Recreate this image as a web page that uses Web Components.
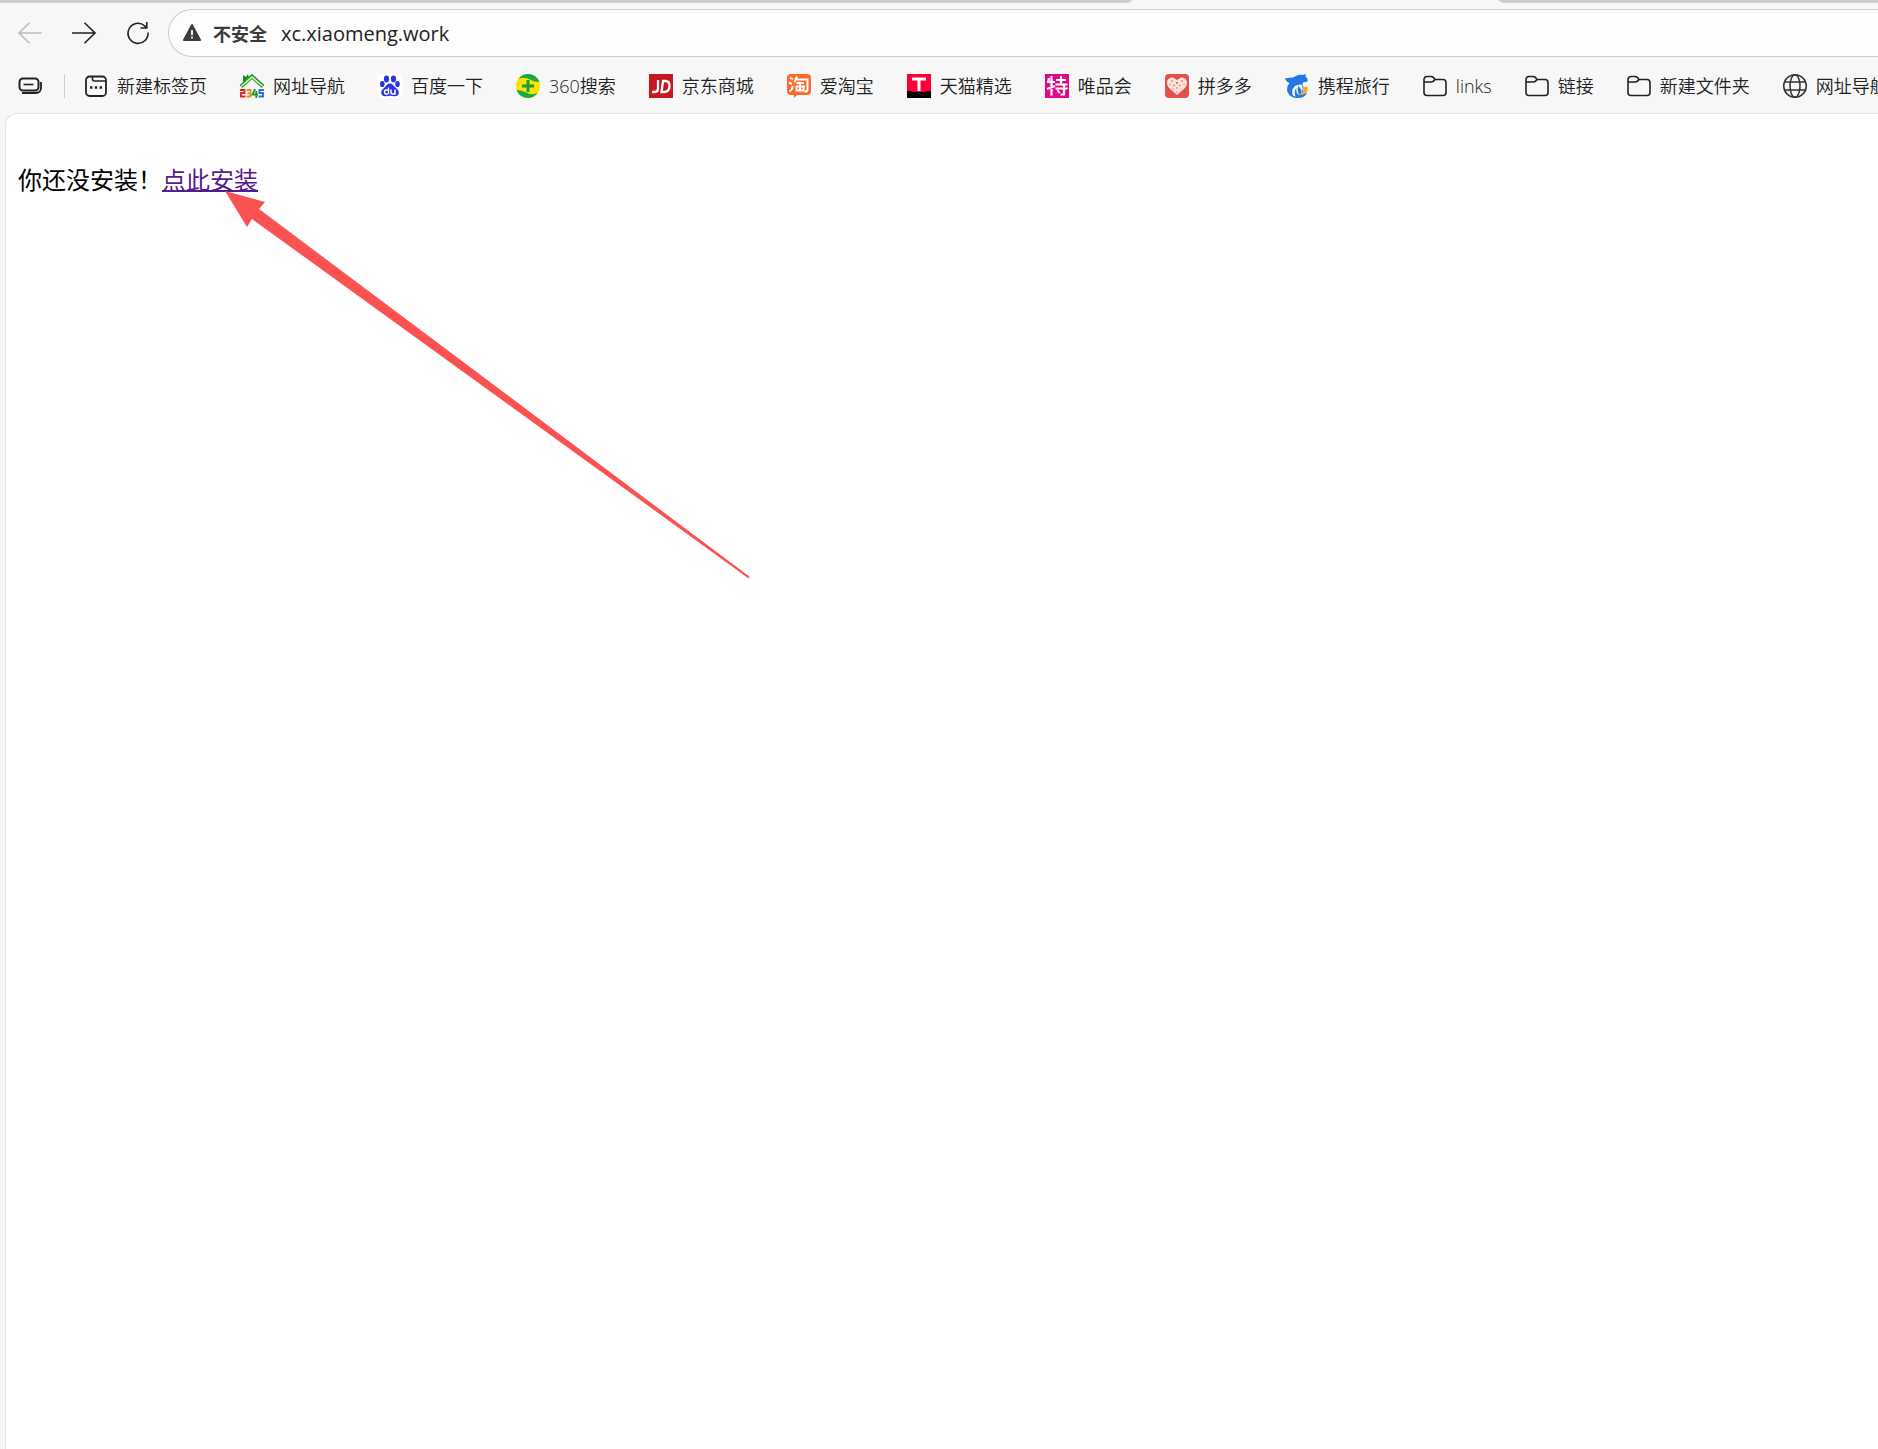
<!DOCTYPE html>
<html lang="zh-CN">
<head>
<meta charset="utf-8">
<title>xc.xiaomeng.work</title>
<style>
  html, body {
    margin: 0;
    height: 100%;
    overflow: hidden;
    font-family: "Open Sans", "Noto Sans CJK SC", sans-serif;
  }
</style>
</head>
<body>
<browser-window></browser-window>

<script>
const ICONS = {
  back: '<path d="M23.500 12H1M11.500 1.800L1 12L11.500 22.200" fill="none" stroke="#bdbdbd" stroke-width="1.600"/>',
  forward: '<path d="M0 12H23M12.500 1.800L23 12L12.500 22.200" fill="none" stroke="#222" stroke-width="1.600"/>',
  reload: '<path d="M22 11.500A10 10 0 1 1 18.600 4.800L20.500 6.600M20.800 1V7H14.500" fill="none" stroke="#222" stroke-width="1.600"/>',
  warning: '<path d="M12 4.200L20 19H4Z" fill="#3b3b3b" stroke="#3b3b3b" stroke-width="2" stroke-linejoin="round"/><path d="M12 9V14M12 15.500V17.500" stroke="#fff" stroke-width="1.800"/>',
  tabs: '<rect x="1.500" y="4.500" width="19" height="12" rx="3.500" fill="none" stroke="#222" stroke-width="2"/><path d="M5.500 10.500H15.500" stroke="#222" stroke-width="1.600"/><path d="M4 19H17.500Q23 19 23 13.500V8" fill="none" stroke="#222" stroke-width="1.800"/>',
  page: '<rect x="2" y="2.500" width="20" height="19.500" rx="3.500" fill="none" stroke="#222" stroke-width="1.800"/><path d="M8.500 2.500V5Q8.500 7 10.500 7H22" fill="none" stroke="#222" stroke-width="1.600"/><path d="M6 13.500h2.400M10.800 13.500h2.400M15.600 13.500h2.400" stroke="#222" stroke-width="2.400"/>',
  nav: '<path d="M3 1L6 3L8 0L9 4L12 4L7 8L3 8Z" fill="#159015"/><path d="M1 12.500L12 2.500L23 12.500" fill="none" stroke="#2a9a22" stroke-width="4"/><path d="M1.500 12.300L12 3L22.500 12.300" fill="none" stroke="#dff0dc" stroke-width="1.500"/><rect y="14" width="24" height="10" fill="#fff"/><g fill="none" stroke-width="1.900"><path d="M0 16H4.500V19H1V22.500H5.500" stroke="#e8231e"/><path d="M6.500 16H10.500V22.500H6.500M7.500 19.200H10.500" stroke="#f58a1f"/><path d="M15 15L12.500 20.500H18M16.300 17V24" stroke="#24952a"/><path d="M24 16H19.500V19H23V22.500H18.500" stroke="#2171d6"/></g>',
  baidu: '<rect width="24" height="24" rx="2" fill="#fff"/><g fill="#2932e1"><ellipse cx="8.500" cy="5" rx="2.600" ry="3.400"/><ellipse cx="15.500" cy="5" rx="2.600" ry="3.400"/><ellipse cx="4.300" cy="10" rx="2.300" ry="3.100"/><ellipse cx="19.500" cy="10" rx="2.300" ry="3.100"/><path d="M12 9.500C14.800 9.500 15.500 12 18 14C22.500 17.500 21.500 22.300 16.500 22.200C13 21.500 11 21.500 8 22.200C3 22.800 1.500 17.500 5.500 14.500C8.500 12 8.800 9.500 12 9.500Z"/></g><path d="M10.500 13.500V20M10 16H8Q6.500 16 6.500 18T8 20H10M13 15.500V18.500Q13 20 14.500 20H17V15.500" fill="none" stroke="#fff" stroke-width="1.500"/>',
  so: '<circle cx="12" cy="12" r="12" fill="#ffe100"/><path d="M2.500 5Q6 0 12 0Q20 0 23.500 8Q18 8 14 5.500Q8 2.500 2.500 5ZM21.500 19Q18 24 12 24Q4 24 .5 16Q6 16 10 18.500Q16 21.500 21.500 19Z" fill="#19a846"/><path d="M12 6V18M6 12H18" stroke="#12a03c" stroke-width="3"/>',
  jd: '<rect width="24" height="24" fill="#c81623"/><path d="M9 6V14.500Q9 18 6 18H3M13 7H16.500Q20.500 7 20.500 12T16 18H12.500L14 7" fill="none" stroke="#fff" stroke-width="2.300"/>',
  taobao: '<path d="M4 0H20Q24 0 24 4V17Q24 21 20 21H10L7 24V21H4Q0 21 0 17V4Q0 0 4 0Z" fill="#ff6a28"/><g fill="none" stroke="#fff" stroke-width="2"><path d="M3 3.500L6 5.500M2 8.500L5 10M2.500 17.500Q6 15 5.500 12M10 2.500L7.500 8M9 5.500H20.500V15.500Q20.500 18 17.500 17.500M9.500 9H17M8.500 12.500H18M13 8V16M9.500 13.500V16.500H16.500V13.500"/></g>',
  tmall: '<rect width="24" height="24" fill="#000"/><path d="M0 0H24V17H20.500Q19 17 18.500 18H5.500Q5 17 3.500 17H0Z" fill="#ff0036"/><path d="M5 5H19M12 5V17" stroke="#fff" stroke-width="3"/>',
  vip: '<rect width="24" height="24" fill="#e0078c"/><path d="M4 4L3 9M2 8H10M6.500 2V21.500M2 15L10 12M11 6H21M16 2V10M10.500 10.500H22.500M10.500 14.500H22.500M19 11V20.500H15.500M12.500 16L14.500 19" fill="none" stroke="#fff" stroke-width="2.200"/>',
  pdd: '<rect width="24" height="24" rx="4" fill="#e2504b"/><path d="M12 21L4 14Q1 10 2.500 6Q4 3 8 3.500L12 6L16 3.500Q20 3 21.500 6Q23 10 20 14Z" fill="#fbe3dd"/><g fill="#e2504b"><circle cx="7" cy="7" r=".8"/><circle cx="17" cy="7" r=".8"/><circle cx="12" cy="9" r="1"/><circle cx="5" cy="10.500" r=".6"/><circle cx="19" cy="10.500" r=".6"/><circle cx="9" cy="11.500" r=".8"/><circle cx="15" cy="11.500" r=".8"/><circle cx="12" cy="14" r=".8"/><circle cx="8" cy="15" r=".6"/><circle cx="16" cy="15" r=".6"/><circle cx="12" cy="18" r=".6"/></g>',
  ctrip: '<path d="M0 4Q3 4.500 5 3.500Q8 4 10 2.500Q13 0 18 1L21 0L20.500 2.500Q23.500 5 22.500 7.500L18 8.500Q17 10 18 12.500Q19.500 17 16 20L22 19Q20 24 13 24Q5 24 2.500 18Q1 13 4.500 9Q1 8 0 4Z" fill="#2577e3"/><path d="M8.500 22Q5 17 10 12Q14 10 16.500 10.500Q18.500 14 17 18L13.500 21Q10.500 18 11.500 14Q8.500 17 10.500 22.500Z" fill="#f7f7f7"/><path d="M13.500 12Q11.500 16 14 20.500Q17 19 16.500 16Z" fill="#2577e3"/><path d="M18 12.500L22.500 13Q23.500 18 19.500 20Q17 21.500 14 21Q18.500 19 18.500 16Q18.500 14 18 12.500Z" fill="#ffa51f"/>',
  folder: '<path d="M1 6V18.500A3 3 0 0 0 4 21.500H20A3 3 0 0 0 23 18.500V8.500A3 3 0 0 0 20 5.500H12Q10.500 2.500 8 2.500H4A3 3 0 0 0 1 5.500V8H8.500Q10.500 8 12 5.500" fill="none" stroke="#222" stroke-width="1.600"/>',
  globe: '<g fill="none" stroke="#333" stroke-width="1.500"><circle cx="12" cy="12" r="11.300"/><ellipse cx="12" cy="12" rx="5" ry="11.300"/><path d="M1.500 8H22.500M1.500 16H22.500"/></g>',
};

class UiIcon extends HTMLElement {
  constructor() {
    super();
    this.attachShadow({ mode: 'open' });
  }

  connectedCallback() {
    this.shadowRoot.innerHTML = `
      <style>
        :host { display: block; flex: none; width: 24px; height: 24px; }
        svg { display: block; width: 100%; height: 100%; overflow: visible; }
      </style>
      <svg viewBox="0 0 24 24" aria-hidden="true">${ICONS[this.getAttribute('name')]}</svg>
    `;
  }
}
customElements.define('ui-icon', UiIcon);

class TabStrip extends HTMLElement {
  constructor() {
    super();
    this.attachShadow({ mode: 'open' }).innerHTML = `
      <style>
        :host {
          display: grid;
          grid-template-columns: 1132fr 367fr 379fr;
          height: 3px;
          background: #f7f7f7;
        }
        .left { background: #cdcdcd; border-bottom-right-radius: 6px 3px; }
        .right { background: #cdcdcd; border-bottom-left-radius: 6px 3px; }
      </style>
      <div class="left"></div>
      <div></div>
      <div class="right"></div>
    `;
  }
}
customElements.define('tab-strip', TabStrip);

class AddressBar extends HTMLElement {
  constructor() {
    super();
    this.attachShadow({ mode: 'open' }).innerHTML = `
      <style>
        :host {
          display: flex;
          align-items: center;
          flex: 1;
          gap: 14px;
          box-sizing: border-box;
          height: 48px;
          padding-left: 11px;
          border: 1px solid #cdcdcd;
          border-right: 0;
          border-radius: 24px 0 0 24px;
          background: #fdfdfd;
        }
        button {
          display: flex;
          align-items: center;
          gap: 9px;
          padding: 0;
          border: 0;
          background: none;
          color: #3b3b3b;
          font: bold 18px/24px "Noto Sans CJK SC", sans-serif;
        }
        input {
          flex: 1;
          min-width: 0;
          padding: 2px 0 0;
          border: 0;
          outline: 0;
          background: none;
          color: #222;
          font-family: inherit;
          font-size: 20px;
          line-height: 28px;
        }
      </style>
      <button type="button"><ui-icon name="warning"></ui-icon>不安全</button>
      <input type="text" aria-label="地址" value="xc.xiaomeng.work">
    `;
  }
}
customElements.define('address-bar', AddressBar);

class NavToolbar extends HTMLElement {
  constructor() {
    super();
    this.attachShadow({ mode: 'open' }).innerHTML = `
      <style>
        :host {
          display: flex;
          align-items: center;
          padding: 6px 0 0 18px;
        }
        nav { display: flex; gap: 30px; margin-right: 18px; }
        button { padding: 0; border: 0; background: none; }
      </style>
      <nav>
        <button type="button" aria-label="后退" disabled><ui-icon name="back"></ui-icon></button>
        <button type="button" aria-label="前进"><ui-icon name="forward"></ui-icon></button>
        <button type="button" aria-label="刷新"><ui-icon name="reload"></ui-icon></button>
      </nav>
      <address-bar></address-bar>
    `;
  }
}
customElements.define('nav-toolbar', NavToolbar);

class BookmarkItem extends HTMLElement {
  constructor() {
    super();
    this.attachShadow({ mode: 'open' });
  }

  connectedCallback() {
    this.shadowRoot.innerHTML = `
      <style>
        :host { display: block; flex: none; }
        a {
          display: flex;
          align-items: center;
          gap: 9px;
          color: #222;
          font-size: 18px;
          font-weight: 350;
          line-height: 24px;
          text-decoration: none;
          white-space: nowrap;
        }
      </style>
      <a href="#"><ui-icon name="${this.getAttribute('icon')}"></ui-icon><slot></slot></a>
    `;
  }
}
customElements.define('bookmark-item', BookmarkItem);

class BookmarkBar extends HTMLElement {
  constructor() {
    super();
    this.attachShadow({ mode: 'open' }).innerHTML = `
      <style>
        :host {
          display: flex;
          align-items: center;
          box-sizing: border-box;
          height: 56px;
          padding: 2px 0 0 18px;
          overflow: hidden;
        }
        button { flex: none; padding: 0; border: 0; background: none; }
        .divider { flex: none; width: 1px; height: 24px; margin: 0 19px 0 22px; background: #cdcdcd; }
        .items { display: flex; gap: 33px; }
      </style>
      <button type="button" aria-label="标签页"><ui-icon name="tabs"></ui-icon></button>
      <div class="divider"></div>
      <div class="items"><slot></slot></div>
    `;
  }
}
customElements.define('bookmark-bar', BookmarkBar);

class PointerArrow extends HTMLElement {
  constructor() {
    super();
    this.attachShadow({ mode: 'open' }).innerHTML = `
      <style>
        :host { display: block; width: 526px; height: 388px; pointer-events: none; }
        svg { display: block; width: 100%; height: 100%; }
      </style>
      <svg viewBox="0 0 526 388" aria-hidden="true">
        <path d="M0 0L40 11L34 18L525 386L523 387L27 28L22 36Z" fill="#fa5151"/>
      </svg>
    `;
  }
}
customElements.define('pointer-arrow', PointerArrow);

class PageView extends HTMLElement {
  constructor() {
    super();
    this.attachShadow({ mode: 'open' }).innerHTML = `
      <style>
        :host {
          display: block;
          flex: 1;
          margin-left: 5px;
          padding: 48px 12px 0;
          border: 1px solid #e6e6e6;
          border-width: 1px 0 0 1px;
          border-top-left-radius: 12px;
          background: #fff;
        }
        p { margin: 0; color: #000; font-size: 24px; line-height: 36px; }
        a {
          position: relative;
          color: #551a8b;
          text-decoration: underline;
          text-decoration-thickness: 2px;
        }
        /* the arrow points at the link from below */
        pointer-arrow { position: absolute; top: 28px; left: 63px; }
      </style>
      <p>你还没安装！<a href="#">点此安装<pointer-arrow></pointer-arrow></a></p>
    `;
  }
}
customElements.define('page-view', PageView);

class BrowserWindow extends HTMLElement {
  constructor() {
    super();
    this.attachShadow({ mode: 'open' }).innerHTML = `
      <style>
        :host {
          display: flex;
          flex-direction: column;
          min-height: 100vh;
          background: #f7f7f7;
        }
      </style>
      <tab-strip></tab-strip>
      <nav-toolbar></nav-toolbar>
      <bookmark-bar>
        <bookmark-item icon="page">新建标签页</bookmark-item>
        <bookmark-item icon="nav">网址导航</bookmark-item>
        <bookmark-item icon="baidu">百度一下</bookmark-item>
        <bookmark-item icon="so">360搜索</bookmark-item>
        <bookmark-item icon="jd">京东商城</bookmark-item>
        <bookmark-item icon="taobao">爱淘宝</bookmark-item>
        <bookmark-item icon="tmall">天猫精选</bookmark-item>
        <bookmark-item icon="vip">唯品会</bookmark-item>
        <bookmark-item icon="pdd">拼多多</bookmark-item>
        <bookmark-item icon="ctrip">携程旅行</bookmark-item>
        <bookmark-item icon="folder">links</bookmark-item>
        <bookmark-item icon="folder">链接</bookmark-item>
        <bookmark-item icon="folder">新建文件夹</bookmark-item>
        <bookmark-item icon="globe">网址导航</bookmark-item>
      </bookmark-bar>
      <page-view></page-view>
    `;
  }
}
customElements.define('browser-window', BrowserWindow);
</script>
</body>
</html>
